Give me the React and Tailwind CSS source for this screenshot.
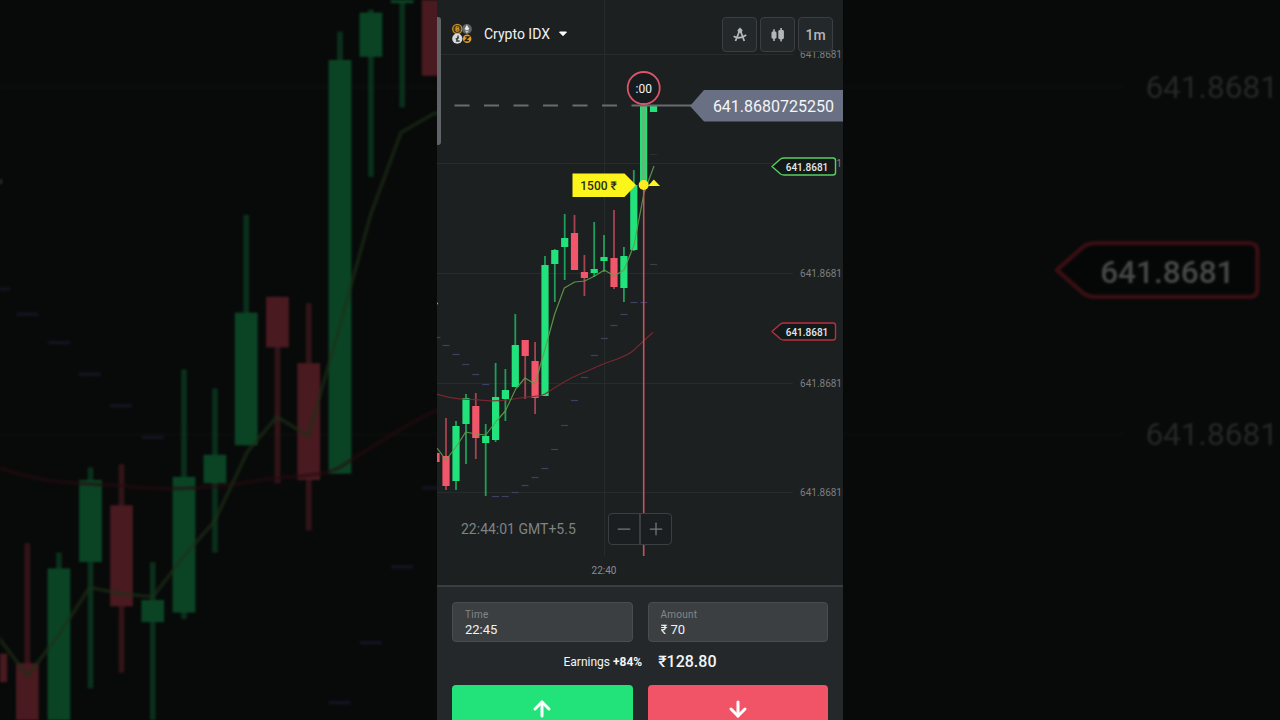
import React, { useState } from 'react';
import { ArrowDown, ArrowUp, Minus, Plus } from 'lucide-react';

const UP = '#21e27b';
const DOWN = '#f2566a';

// [center x, high, low, body top, body bottom, color]
const CANDLES = [
    [-1, 453, 462, 453, 462, DOWN],
    [9, 418, 490, 456, 486, DOWN],
    [19, 421, 490, 426, 481, UP],
    [29, 394, 464, 398, 424, UP],
    [38.8, 393, 459, 406, 438, DOWN],
    [48.7, 424, 496, 436, 443, UP],
    [58.6, 363, 442, 397, 440, UP],
    [68.4, 369, 421, 390, 399, UP],
    [78.3, 314, 387, 345, 387, UP],
    [88.2, 340, 399, 340, 356, DOWN],
    [98.1, 342, 414, 361, 398, DOWN],
    [108, 256, 396, 265, 396, UP],
    [117.8, 249, 302, 250, 264, UP],
    [127.7, 214, 280, 238, 247, UP],
    [137.5, 215, 270, 233, 270, DOWN],
    [147.4, 255, 296, 272, 278, DOWN],
    [157.2, 222, 277, 269, 273, UP],
    [167, 235, 272, 257, 261, UP],
    [177, 210, 289, 258, 287, DOWN],
    [186.9, 247, 302, 256, 288, UP],
    [196.8, 170, 251, 185, 250, UP],
    [206.6, 106, 185, 106, 185, UP],
    [216.5, 106, 112, 106, 112, UP],
];

const FAST_MA = '0,448 9,460 19,447 28.7,432 38.7,434 48.7,435 58.7,422 68.3,411 78.7,389 88,378 98,384 108,349 117.7,314 127.3,288 137.7,282 147.7,281 157.7,276 167.3,270 177.3,276 187,270 197,245 207,193 217,166';
const SLOW_MA = 'M0 394 C10 398 20 399 38.7 399.7 C50 401.500 66 401 83 398 C93 396.500 102 397 108 394 C120 386 133 378 143 374 S160 366.500 167 363.700 S190 357 197 350 S211 337 216 332.300';

const SAR = [
    [0, 337], [9, 345], [19, 354], [28.7, 364], [38.7, 374], [48.7, 384], [58.5, 496], [68.3, 496], [78.2, 492],
    [88, 485], [98, 477], [107.8, 468], [117.7, 449], [127.6, 425], [137.5, 400], [147.5, 377], [157.4, 355],
    [167.3, 338], [177, 325], [187, 314], [197, 302], [206.7, 302], [216.6, 264], [216.6, 154],
];

const GRID_ROWS = [54, 163, 273, 383, 492];

const LevelBadge = ({ y, color }) => (
    <g>
        <path
            d={`M335 ${y} L343.5 ${y - 7.5} Q345 ${y - 8.5} 347 ${y - 8.5} H396 Q398.500 ${y - 8.5} 398.500 ${y - 6} V${y + 6} Q398.500 ${y + 8.5} 396 ${y + 8.5} H347 Q345 ${y + 8.5} 343.5 ${y + 7.5} Z`}
            fill="#131819"
            stroke={color}
            strokeWidth="1.4"
            strokeLinejoin="round"
        />
        <text x="370" y={y + 4} textAnchor="middle" fontSize="10" fontWeight="500" fill="#e6e8e8">641.8681</text>
    </g>
);

// Grid, candles and indicators, shared by the phone and the backdrop
const Plot = ({ rows, lineOpacity }) => (
    <g>
        {GRID_ROWS.map((y) => (
            <line key={y} x1="0" x2="356" y1={y + 0.5} y2={y + 0.5} stroke="#262b2b" />
        ))}
        <line x1="167.500" x2="167.500" y1="0" y2="556" stroke="#262b2b" />

        {rows.map((y) => (
            <text key={y} x="405" y={y + 4} textAnchor="end" fontSize="10" fill="#7b7f80">641.8681</text>
        ))}

        {SAR.map(([x, y], i) => (
            <line key={i} x1={x - 3.5} x2={x + 3.5} y1={y + 0.5} y2={y + 0.5} stroke={i < 22 ? '#3f3f63' : '#3a3f42'} strokeWidth={i < 23 ? 1.2 : 0.5} />
        ))}

        {CANDLES.map(([x, high, low, top, bottom, color]) => (
            <g key={x} fill={color}>
                <rect x={x - 0.9} y={high} width="1.800" height={low - high} opacity="0.65" />
                <rect x={x - 3.6} y={top} width="7.200" height={bottom - top} />
            </g>
        ))}

        <g opacity={lineOpacity} fill="none" strokeLinejoin="round">
            <path d={SLOW_MA} stroke="#7f2831" strokeWidth="1.2" />
            <polyline points={FAST_MA} stroke="#5f9f4c" strokeWidth="1.2" />
        </g>
        <circle cx="0" cy="303.500" r="1" fill="#a9adad" />
        <LevelBadge y={331.5} color="#b8303f" />
    </g>
);

const TradeMarks = () => (
    <g>
        <text x="167" y="574" textAnchor="middle" fontSize="10" fill="#8a8e8f">22:40</text>
        <rect x="204.800" y="106" width="3.800" height="79" fill="#5cbb76" />
        <line x1="206.700" x2="206.700" y1="185" y2="556" stroke="#c4525f" strokeWidth="1.6" />

        {/* Current price */}
        <line x1="17.500" x2="195" y1="105.500" y2="105.500" stroke="#686c70" strokeWidth="1.8" strokeDasharray="15 14.500" />
        <line x1="195" x2="255" y1="105.500" y2="105.500" stroke="#686c70" strokeWidth="1.8" />
        <path d="M253 106 L267 90 H406 V121.500 H267 Z" fill="#697083" />
        <text x="397" y="112" textAnchor="end" fontSize="16" fill="#f4f5f7">641.8680725250</text>

        {/* Deal expiry */}
        <circle cx="206.700" cy="88" r="16" fill="#171b1d" stroke="#dc5468" strokeWidth="1.8" />
        <text x="206.700" y="92.500" textAnchor="middle" fontSize="12" fill="#f4f5f7">:00</text>

        {/* Open deal */}
        <path d="M135.500 173.500 H187.500 L199 185 L187.500 197 H135.500 Z" fill="#fbf51b" />
        <text x="161.500" y="190" textAnchor="middle" fontSize="12" fontWeight="500" fill="#2c2d15">1500 ₹</text>
        <circle cx="206.700" cy="185" r="5" fill="#ffec1c" />
        <path d="M211 186 L216.800 179.500 L223 186 Z" fill="#fbf51b" />

        <LevelBadge y={166.5} color="#55cf62" />
        <path d="M0 17 h1 q3 0 3 3 V142 q0 3 -3 3 H0 Z" fill="#606466" />
    </g>
);

const CoinsIcon = () => (
    <svg viewBox="0 0 20 22" className="h-[22px] w-5" aria-hidden="true">
        <circle cx="5.300" cy="6" r="4.600" fill="#4a3814" stroke="#c98f27" strokeWidth="1.3" />
        <path d="M4 3.800 h1.800 a1 1 0 0 1 0 2.100 H4 h2.100 a1.100 1.100 0 0 1 0 2.200 H4 Z" fill="none" stroke="#e0a233" strokeWidth="1" />
        <circle cx="14.900" cy="6" r="4.900" fill="#626669" />
        <path d="M14.900 1.800 L17.300 6 L14.900 7.500 L12.500 6 Z M12.700 7 L14.900 8.400 L17.100 7 L14.900 10.200 Z" fill="#e8eaea" />
        <circle cx="5.300" cy="15.700" r="5.100" fill="#d9dbdb" />
        <path d="M6.300 12.500 L4.700 18 H7.600 M3.700 16.200 L6.900 14.700" fill="none" stroke="#3a3d3f" strokeWidth="1.3" />
        <circle cx="15.100" cy="15.800" r="4.300" fill="#e19a25" />
        <path d="M13.300 13.800 H16.800 L13.300 17.700 H16.900" fill="none" stroke="#221d12" strokeWidth="1.3" />
    </svg>
);

const CompassIcon = () => (
    <svg viewBox="0 0 16 16" className="h-4 w-4" fill="none" stroke="#b4b7b9" strokeWidth="1.8" aria-hidden="true">
        <path d="M8 0.500 L10.600 3.200 L9.600 5.800 H6.400 L5.400 3.200 Z" fill="#b4b7b9" stroke="none" />
        <path d="M7.100 5 L3.500 14 M8.900 5 L12.300 14" />
        <path d="M1.600 9.300 C5 11.300 10 11 14.200 8" />
    </svg>
);

const CandlesIcon = () => (
    <svg viewBox="0 0 16 16" className="h-4 w-4" fill="#b4b7b9" aria-hidden="true">
        <rect x="1.500" y="4.500" width="5" height="7.200" rx="1.4" />
        <rect x="3.200" y="2.300" width="1.600" height="11.700" />
        <rect x="8.300" y="3" width="5.600" height="9.200" rx="1.4" />
        <rect x="10.300" y="1" width="1.600" height="13.400" />
    </svg>
);

const ToolButton = ({ label, children }) => (
    <button
        aria-label={label}
        className="flex h-[35px] w-[35px] items-center justify-center rounded border border-[#3b3f42] bg-[#23282b] text-sm font-medium text-[#b4b7b9]"
    >
        {children}
    </button>
);

const Field = ({ id, label, value, onChange }) => (
    <div className="flex h-10 flex-col justify-end rounded border border-[#494d50] bg-[#3b3f42] px-3 pb-[3px]">
        <label htmlFor={id} className="text-[10px] leading-[14px] tracking-wide text-[#83878a]">{label}</label>
        <input
            id={id}
            value={value}
            onChange={(e) => onChange(e.target.value)}
            className="w-full bg-transparent text-[13px] leading-4 text-[#f1f2f3] outline-none"
        />
    </div>
);

export default function App() {
    const [time, setTime] = useState('22:45');
    const [amount, setAmount] = useState('₹ 70');

    return (
        <div className="relative flex h-screen justify-center overflow-hidden bg-black font-['Roboto',sans-serif]">
            {/* Dimmed close-up of the chart behind the phone */}
            <div className="absolute inset-0 bg-[#1c2020] opacity-30" aria-hidden="true">
                <svg viewBox="0 246 406 228" preserveAspectRatio="xMidYMid slice" className="h-full w-full blur-[1px]">
                    <Plot rows={[273, 383]} lineOpacity={0.6} />
                </svg>
            </div>

            <main className="relative w-[406px] max-w-full overflow-hidden bg-[#25282b]">
                <section className="relative flex aspect-[406/585] flex-col justify-between bg-[#1c2020]">
                    <svg viewBox="0 0 406 585" className="absolute inset-0 h-full w-full">
                        <Plot rows={GRID_ROWS} lineOpacity={0.9} />
                        <TradeMarks />
                    </svg>

                    <header className="relative flex items-start justify-between pt-[17px] pr-[10px] pl-[15px]">
                        <button className="flex h-[34px] items-center gap-3 text-sm text-[#f1f2f3]">
                            <CoinsIcon />
                            <span className="flex items-center gap-2">
                                Crypto IDX
                                <svg viewBox="0 0 10 6" className="h-1.5 w-2.5" aria-hidden="true">
                                    <path d="M1.500 1 H8.500 L5 4.700 Z" fill="#fff" stroke="#fff" strokeLinejoin="round" />
                                </svg>
                            </span>
                        </button>
                        <div className="flex gap-[3px]">
                            <ToolButton label="Indicators"><CompassIcon /></ToolButton>
                            <ToolButton label="Chart type"><CandlesIcon /></ToolButton>
                            <ToolButton>1m</ToolButton>
                        </div>
                    </header>

                    <div className="relative flex items-center gap-8 pb-10 pl-6">
                        <span className="text-sm text-[#7f8384]">22:44:01 GMT+5.5</span>
                        <div className="flex h-8 w-16 divide-x-2 divide-[#3b3f42] rounded border border-[#3b3f42] bg-[#1a1e20] text-[#74787a]">
                            <button aria-label="Zoom out" className="flex flex-1 items-center justify-center">
                                <Minus size={20} strokeWidth={1.5} />
                            </button>
                            <button aria-label="Zoom in" className="flex flex-1 items-center justify-center">
                                <Plus size={20} strokeWidth={1.5} />
                            </button>
                        </div>
                    </div>
                </section>

                <section className="border-t-2 border-[#3a3e41] px-[15px] pt-[15px] pb-4">
                    <div className="grid grid-cols-2 gap-[15px]">
                        <Field id="time" label="Time" value={time} onChange={setTime} />
                        <Field id="amount" label="Amount" value={amount} onChange={setAmount} />
                    </div>

                    <div className="flex items-center justify-center gap-4 pt-2 pb-[11px] text-[#f4f5f6]">
                        <span className="text-xs leading-6">Earnings <b className="font-bold">+84%</b></span>
                        <span className="text-base leading-6 font-medium">₹128.80</span>
                    </div>

                    <div className="grid grid-cols-2 gap-[15px]">
                        <button aria-label="Up" className="flex h-12 items-center justify-center rounded bg-[#22e27a] text-white">
                            <ArrowUp size={24} strokeWidth={3} />
                        </button>
                        <button aria-label="Down" className="flex h-12 items-center justify-center rounded bg-[#f25467] text-white">
                            <ArrowDown size={24} strokeWidth={3} />
                        </button>
                    </div>
                </section>
            </main>
        </div>
    );
}
